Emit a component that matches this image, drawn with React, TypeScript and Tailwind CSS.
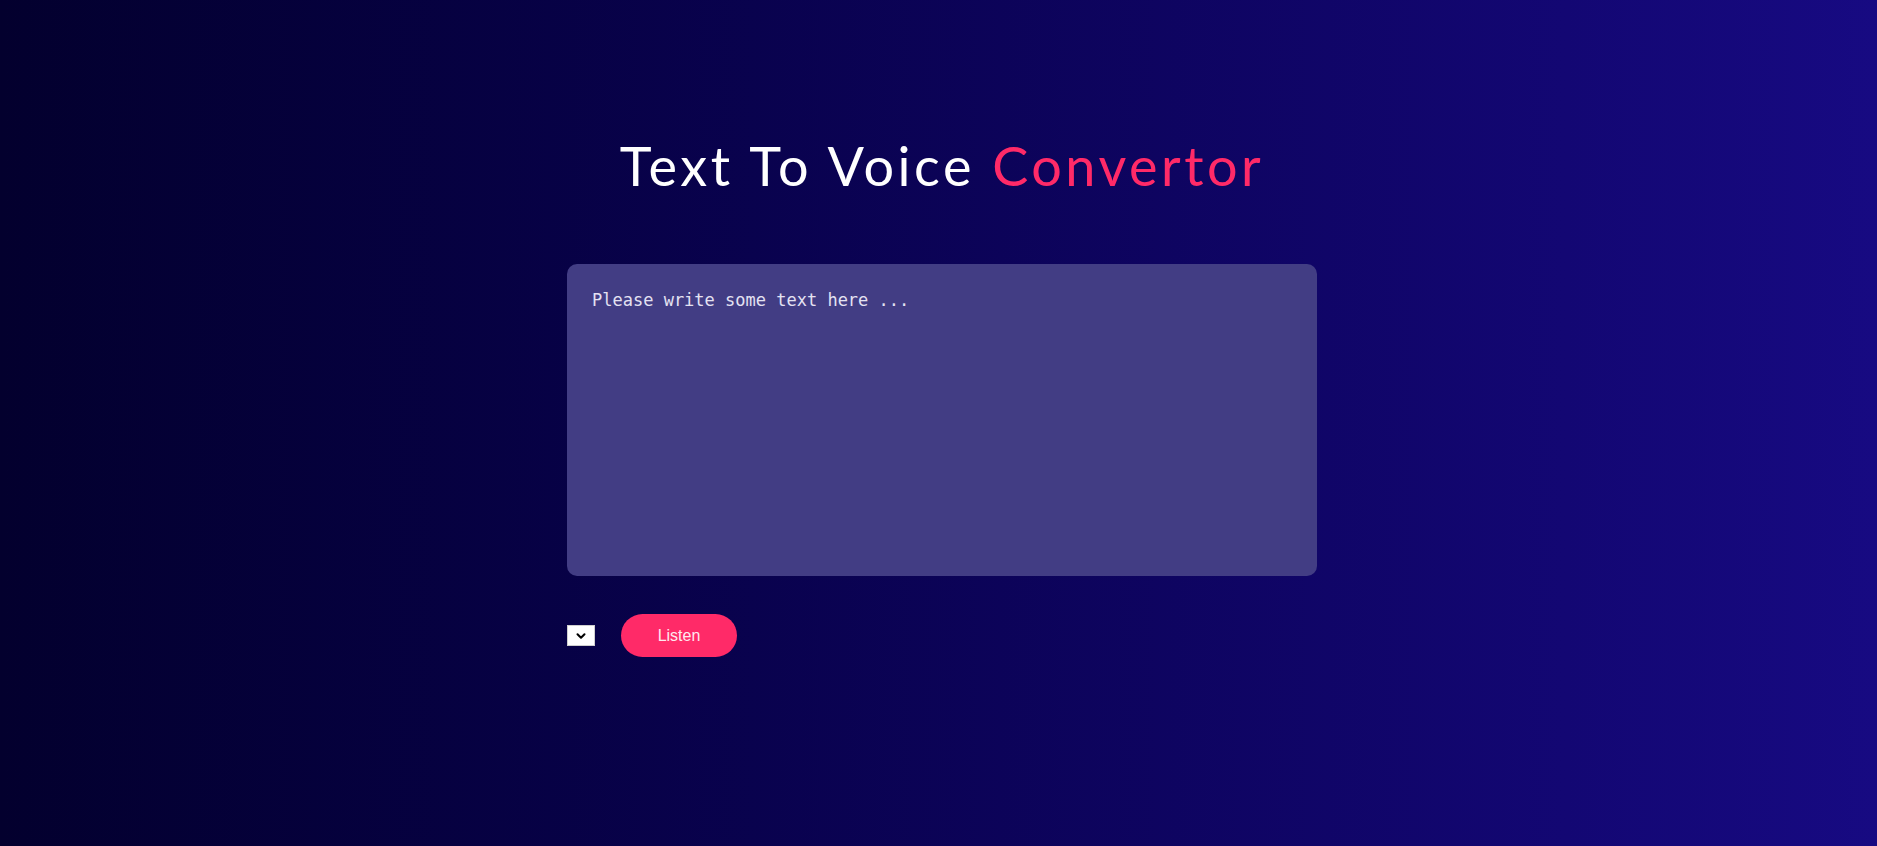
import { ChevronDown } from "lucide-react";

const App = () => {
  return (
    <div className="min-h-screen w-full bg-linear-to-r from-[#03002e] to-[#170a82] flex justify-center pl-[7px]">
      <div className="w-[750px] pt-[139px]">
        {/* Title */}
        <h1 className="text-center text-[54px] leading-none font-normal tracking-[3.5px] text-white font-['Lato',sans-serif]">
          Text To Voice <span className="text-[#ff2a68]">Convertor</span>
        </h1>

        {/* Text area */}
        <textarea
          className="mt-[71px] block w-full h-[312px] resize-none rounded-[10px] bg-[#423d84] px-[25px] pt-[24px] pb-[20px] text-[17px] text-white placeholder:text-[#e4e2f2] outline-none font-['DejaVu_Sans_Mono',monospace]"
          placeholder="Please write some text here ..."
        />

        {/* Controls */}
        <div className="mt-[38px] flex items-center gap-[26px]">
          <div className="w-[28px] h-[21px] bg-white border border-[#cfcfcf] flex items-center justify-center">
            <ChevronDown className="w-[14px] h-[14px] text-black" strokeWidth={3.5} />
          </div>
          <button className="w-[116px] h-[43px] rounded-full bg-[#ff2a68] text-[16px] text-[#ffe8ef] font-['Liberation_Sans',Arial,sans-serif]">
            Listen
          </button>
        </div>
      </div>
    </div>
  );
};

export default App;
